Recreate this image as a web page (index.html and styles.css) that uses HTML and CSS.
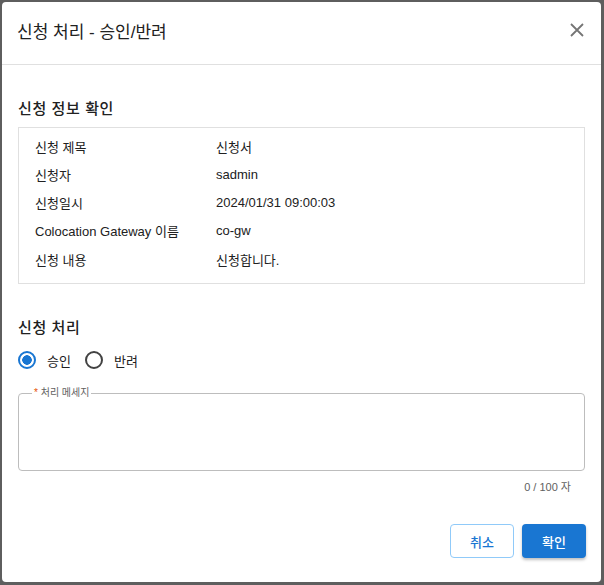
FILE: index.html
```html
<!DOCTYPE html>
<html lang="ko">
<head>
<meta charset="utf-8">
<link rel="stylesheet" href="styles.css">
</head>
<body>
<div class="dialog">
  <div class="header">
    <h1 class="title">신청 처리 - 승인/반려</h1>
    <button class="close" aria-label="닫기">
      <svg width="14" height="14" viewBox="0 0 14 14"><path d="M1 1L13 13M13 1L1 13" stroke="#757575" stroke-width="1.8" fill="none"/></svg>
    </button>
  </div>
  <div class="content">
    <h2 class="section-title">신청 정보 확인</h2>
    <div class="info-box">
      <div class="row"><span class="label">신청 제목</span><span class="value">신청서</span></div>
      <div class="row"><span class="label">신청자</span><span class="value">sadmin</span></div>
      <div class="row"><span class="label">신청일시</span><span class="value">2024/01/31 09:00:03</span></div>
      <div class="row"><span class="label">Colocation Gateway 이름</span><span class="value">co-gw</span></div>
      <div class="row"><span class="label">신청 내용</span><span class="value">신청합니다.</span></div>
    </div>
    <h2 class="section-title second">신청 처리</h2>
    <div class="radios">
      <label class="radio"><span class="circle checked"></span>승인</label>
      <label class="radio"><span class="circle"></span>반려</label>
    </div>
    <fieldset class="field">
      <legend><span class="star">*</span> 처리 메세지</legend>
    </fieldset>
    <div class="counter">0 / 100 자</div>
  </div>
  <div class="actions">
    <button class="btn outline">취소</button>
    <button class="btn primary">확인</button>
  </div>
</div>
</body>
</html>
```
FILE: styles.css
```css
* { box-sizing: border-box; }
html, body { margin: 0; padding: 0; }
body {
  background: #5e5e5e;
  width: 604px;
  height: 585px;
  padding: 2px 3px 3px 2px;
  font-family: "Liberation Sans", "Noto Sans CJK KR", sans-serif;
  color: #212121;
}
.dialog {
  background: #fff;
  border-radius: 4px;
  height: 580px;
  display: flex;
  flex-direction: column;
}
.header {
  height: 63px;
  border-bottom: 1px solid #e0e0e0;
  display: flex;
  align-items: center;
  justify-content: space-between;
  padding: 0 16px 6px 15px;
}
.title {
  margin: 0;
  font-size: 17px;
  font-weight: 400;
  color: #212121;
}
.close {
  border: 0;
  background: none;
  padding: 0;
  width: 16px;
  height: 16px;
  display: flex;
  align-items: center;
  justify-content: center;
}
.content {
  padding: 0 16px;
  flex: 1;
}
.section-title {
  margin: 34px 0 0;
  font-size: 15px;
  font-weight: 500;
  line-height: 20px;
  color: #212121;
  letter-spacing: 0.6px;
}
.section-title.second { margin-top: 34px; }
.info-box {
  margin-top: 8px;
  border: 1px solid #e0e0e0;
  padding: 4px 16px 10px;
  display: flex;
  flex-direction: column;
}
.row {
  display: flex;
  height: 28.25px;
  align-items: center;
  font-size: 13px;
  color: #212121;
}
.label { width: 181px; }
.radios {
  display: flex;
  gap: 14px;
  margin-top: 9px;
  height: 26px;
  align-items: center;
}
.radio {
  display: flex;
  align-items: center;
  gap: 11px;
  font-size: 13px;
}
.circle {
  width: 18px;
  height: 18px;
  border: 2px solid #424242;
  border-radius: 50%;
  display: inline-block;
}
.circle.checked {
  border-color: #1976d2;
  background: radial-gradient(circle, #1976d2 0 4.5px, transparent 5px);
}
.field {
  margin: 15px 0 0;
  height: 83px;
  border: 1px solid #bdbdbd;
  border-radius: 4px;
  padding: 0 10px;
}
.field legend {
  font-size: 10px;
  color: #616161;
  padding: 0 2px;
  margin-left: 3px;
  line-height: 10px;
}
.star { color: #e65100; }
.counter {
  text-align: right;
  font-size: 11px;
  color: #616161;
  margin-top: 7px;
  padding-right: 14px;
}
.actions {
  display: flex;
  justify-content: flex-end;
  gap: 8px;
  padding: 0 15px 24px;
}
.btn {
  width: 64px;
  height: 34px;
  border-radius: 4px;
  font-family: inherit;
  font-size: 13px;
  font-weight: 500;
}
.outline {
  background: #fff;
  border: 1px solid #90caf9;
  color: #1976d2;
}
.primary {
  background: #1976d2;
  border: 0;
  color: #fff;
  box-shadow: 0 2px 3px rgba(0,0,0,0.25);
}
```
